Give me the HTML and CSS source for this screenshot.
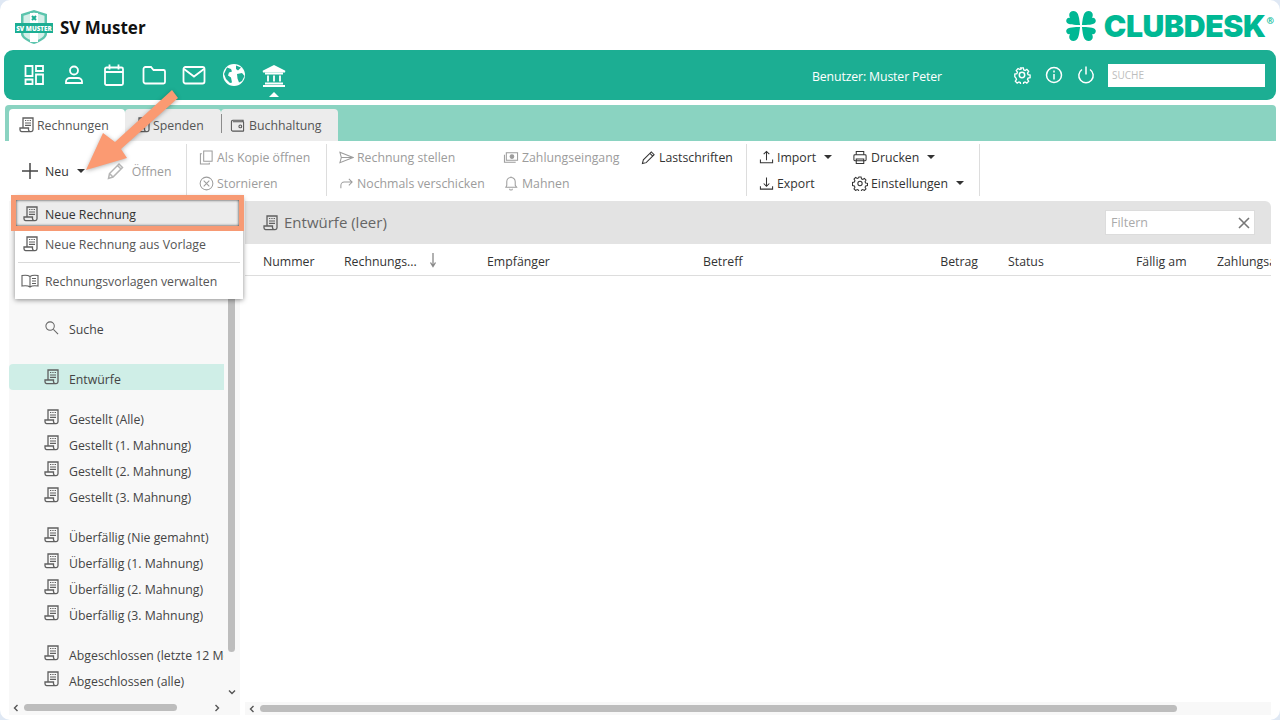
FILE: index.html
```html
<!DOCTYPE html>
<html lang="de">
  <head>
    <meta charset="UTF-8" />
    <meta name="viewport" content="width=device-width, initial-scale=1.0" />
    <title>ClubDesk - Rechnungen</title>
    <link rel="stylesheet" href="styles.css">
  </head>
  <body>
    <svg class="defs" width="0" height="0">
      <symbol id="i-doc" viewBox="0 0 15 16">
        <path d="M4 11V1h10V12.800a1.800 1.800 0 0 1-1.800 1.800H2.600A1.800 1.800 0 0 1 1 12.800V11h8.500v1.800a1.800 1.800 0 0 0 1.800 1.800" fill="none" stroke="currentColor" stroke-width="1.3"/>
        <path d="M6 3.500h1.300M8.300 3.500h1.300M10.600 3.500h1.400M6 6h6M6 8.400h6" fill="none" stroke="currentColor" stroke-width="1.2"/>
      </symbol>
      <symbol id="i-chev-l" viewBox="0 0 8 8"><path d="M5.500 1L2.500 4l3 3" fill="none" stroke="currentColor" stroke-width="1.4"/></symbol>
      <symbol id="i-chev-r" viewBox="0 0 8 8"><path d="M2.500 1l3 3-3 3" fill="none" stroke="currentColor" stroke-width="1.4"/></symbol>
      <symbol id="i-chev-d" viewBox="0 0 8 8"><path d="M1 2.500l3 3 3-3" fill="none" stroke="currentColor" stroke-width="1.4"/></symbol>
    </svg>

    <div class="window">
      <header class="top">
        <div class="brand">
          <svg class="club-logo" viewBox="0 0 38 36" width="38" height="36">
            <path d="M19 1l13 4v20c0 4-7 8-13 10-6-2-13-6-13-10V5z" fill="#5cc4ad"/>
            <path d="M19 3.500l10.500 3.200V25c0 3-6 6-10.500 7.500-4.500-1.500-10.500-4.500-10.500-7.500V6.700z" fill="#d5efe9"/>
            <path d="M15 4h8v29h-8z" fill="#fff"/>
            <path d="M17 7l4 4m0-4l-4 4" stroke="#1cae93" stroke-width="2"/>
            <rect x="0" y="14" width="38" height="10" fill="#1cae93"/>
            <text class="club-logo-text" x="19" y="21.8" text-anchor="middle">SV MUSTER</text>
          </svg>
          <span class="club-name">SV Muster</span>
        </div>
        <div class="clubdesk">
          <svg viewBox="-16.5 -15 33 30" width="30" height="30" preserveAspectRatio="none">
            <g fill="#00b894">
              <path id="leaf" d="M-1-1C-2-6-2-15-8-15C-13-15-14-11-12-8C-15-9-17-6-16-4C-15-1-6-1-1-1Z"/>
              <use href="#leaf" transform="scale(-1 1)"/>
              <use href="#leaf" transform="scale(1 -1)"/>
              <use href="#leaf" transform="scale(-1 -1)"/>
            </g>
          </svg>
          <span class="clubdesk-name">CLUBDESK</span><span class="clubdesk-reg">®</span>
        </div>
      </header>

      <nav class="nav">
        <div class="nav-icons">
          <svg class="nav-icon" viewBox="0 0 24 24"><path d="M3.500 3h7v10h-7zM14 3h7v5h-7zM14 11.500h7V21h-7zM3.500 16.500h7V21h-7z"/></svg>
          <svg class="nav-icon" viewBox="0 0 24 24"><circle cx="12" cy="7.5" r="4"/><path d="M4 20v-1.500c0-2 2-3.500 4-3.500h8c2 0 4 1.500 4 3.500V20z"/></svg>
          <svg class="nav-icon" viewBox="0 0 24 24"><rect x="3" y="4.5" width="18" height="17.5" rx="1.5"/><path d="M3 9h18M7.500 1.500v5M16.500 1.500v5"/></svg>
          <svg class="nav-icon" viewBox="0 0 24 24"><path d="M1.500 6a2 2 0 0 1 2-2h5.500l2.500 3h10a1.500 1.500 0 0 1 1.500 1.500V19a1.500 1.500 0 0 1-1.500 1.500H3.500a2 2 0 0 1-2-2z"/></svg>
          <svg class="nav-icon" viewBox="0 0 24 24"><rect x="1.5" y="4" width="21" height="16.5" rx="2"/><path d="M2 6l10 7.500L22 6"/></svg>
          <svg class="nav-icon globe" viewBox="0 0 24 24"><circle cx="12" cy="12" r="11" fill="#fff" stroke="none"/><path d="M5 4.500l4 1.500 1 2.500-3 1-1 3 3 2 1 5-2 .5-4-4-2-5zM14 2.500l5 2-3 3-2-1.500zM15 11l5-1 2.500 3-2.500 5-3 1.500-1.500-4z" fill="#1cae93" stroke="none"/></svg>
          <span class="nav-current">
            <svg class="nav-icon" viewBox="0 0 24 24"><path d="M1 8.500L12 3l11 5.500z" fill="#fff"/><path d="M3 10.500h18M6 12.500v6M12 12.500v6M18 12.500v6M3 20.500h18M1 23h22"/></svg>
          </span>
        </div>
        <span class="nav-user">Benutzer: Muster Peter</span>
        <div class="nav-tools">
          <svg class="nav-small" viewBox="0 0 18 18"><circle cx="9" cy="9" r="2.7"/><path d="M7.500 1h3l.4 2.300 1.500.7 2-1.200 2 2.200-1.300 1.900.6 1.600 2.300.5v3l-2.300.4-.6 1.500 1.300 2-2 2.100-2-1.300-1.500.7-.4 2.300h-3l-.4-2.300-1.500-.7-2 1.300-2-2.100 1.300-2-.6-1.500L1 11V8l2.300-.5.6-1.600L2.600 4 4.600 1.800l2 1.200 1.500-.7z" transform="translate(.9 .9) scale(.9)"/></svg>
          <svg class="nav-small" viewBox="0 0 18 18"><circle cx="9" cy="9" r="7.5"/><path d="M9 8v5.500M9 4.500v2"/></svg>
          <svg class="nav-small" viewBox="0 0 18 18"><path d="M5 3.500a7.200 7.200 0 1 0 8 0M9 .5v8"/></svg>
          <div class="nav-search">SUCHE</div>
        </div>
      </nav>

      <div class="tabs">
        <div class="tab tab-active"><svg class="doc-icon"><use href="#i-doc"/></svg>Rechnungen</div>
        <div class="tab"><svg class="doc-icon"><use href="#i-doc"/></svg>Spenden</div>
        <div class="tab tab-divided">
          <svg class="tool-icon" viewBox="0 0 16 16"><path d="M14 4V2.500H3a1.500 1.500 0 0 0-1.500 1.500v8.500A1.500 1.500 0 0 0 3 14h11a.5 .5 0 0 0 .5-.5v-9a.5 .5 0 0 0-.5-.5H3"/><circle cx="11" cy="9" r="1.5"/></svg>
          Buchhaltung
        </div>
      </div>

      <div class="toolbar">
        <div class="tool-group group-new">
          <div class="tool"><svg class="plus-icon" viewBox="0 0 16 16"><path d="M8 0v16M0 8h16"/></svg>Neu<i class="caret"></i></div>
          <div class="tool off"><svg class="pencil-icon" viewBox="0 0 18 18"><path d="M1.500 16.500l1-5L12 2l3.500 3.500L6 15zM2.500 11.500L6 15M10.500 3.500L14 7"/></svg>Öffnen</div>
        </div>
        <div class="tool-group">
          <div class="tool off"><svg class="tool-icon" viewBox="0 0 16 16"><path d="M5 1h9v11H5zM3 4H1.500v11H11v-1.500"/></svg>Als Kopie öffnen</div>
          <div class="tool off"><svg class="tool-icon" viewBox="0 0 16 16"><circle cx="8" cy="8" r="6.8"/><path d="M5 5l6 6M11 5l-6 6"/></svg>Stornieren</div>
        </div>
        <div class="tool-group group-bill">
          <div class="tool off"><svg class="tool-icon" viewBox="0 0 16 16"><path d="M1 2.500L15 8 1 13.500l1.500-5.500zM2.500 8H15"/></svg>Rechnung stellen</div>
          <div class="tool off"><svg class="tool-icon wide" viewBox="0 0 16 16"><path d="M3 3h12v8H3zM1 5v8h12"/><circle cx="9" cy="7" r="2" fill="currentColor"/></svg>Zahlungseingang</div>
          <div class="tool"><svg class="tool-icon" viewBox="0 0 16 16"><path d="M1.500 14.500l1-4L11 2l3 3-8.500 8.500zM9.500 3.500l3 3"/></svg>Lastschriften</div>
          <div class="tool off"><svg class="tool-icon" viewBox="0 0 16 16"><path d="M2 13V10a3.500 3.500 0 0 1 3.500-3.500H14M10.500 3l3.500 3.500L10.500 10"/></svg>Nochmals verschicken</div>
          <div class="tool off"><svg class="tool-icon wide" viewBox="0 0 16 16"><path d="M14 12H2.500l1-2V6a4.500 4.500 0 0 1 9 0v4zM6.500 13.500a1.500 1.500 0 0 0 3 0M8 .5v1"/></svg>Mahnen</div>
        </div>
        <div class="tool-group group-data">
          <div class="tool"><svg class="tool-icon" viewBox="0 0 16 16"><path d="M8 11V2M5 4.500L8 1.500l3 3M1.500 10v3.500h13V10"/></svg>Import<i class="caret"></i></div>
          <div class="tool"><svg class="tool-icon wide" viewBox="0 0 16 16"><rect x="1.5" y="5" width="13" height="6.5" rx="1"/><path d="M4 5V1.500h8V5M4 9.500h8V14.500H4z"/></svg>Drucken<i class="caret"></i></div>
          <div class="tool"><svg class="tool-icon" viewBox="0 0 16 16"><path d="M8 1.500V11M5 8l3 3 3-3M1.500 11v3h13v-3"/></svg>Export</div>
          <div class="tool"><svg class="tool-icon wide" viewBox="0 0 16 16"><circle cx="8" cy="8" r="2.3"/><path d="M6.800 1h2.400l.4 2 1.300.6 1.800-1 1.700 1.700-1 1.800.6 1.300 2 .4v2.400l-2 .4-.6 1.300 1 1.800-1.700 1.700-1.800-1-1.300.6-.4 2H6.800l-.4-2-1.300-.6-1.800 1-1.700-1.700 1-1.800-.6-1.300-2-.4V6.800l2-.4.600-1.300-1-1.800 1.700-1.700 1.800 1 1.300-.6z"/></svg>Einstellungen<i class="caret"></i></div>
        </div>
      </div>

      <div class="content">
        <aside class="side">
          <div class="side-list">
            <div class="side-row side-search">
              <svg class="tool-icon" viewBox="0 0 16 16"><circle cx="6.5" cy="6.5" r="4.5"/><path d="M10 10l5 5"/></svg>Suche
            </div>
            <div class="side-row side-gap side-active"><svg class="doc-icon"><use href="#i-doc"/></svg>Entwürfe</div>
            <div class="side-row side-gap"><svg class="doc-icon"><use href="#i-doc"/></svg>Gestellt (Alle)</div>
            <div class="side-row"><svg class="doc-icon"><use href="#i-doc"/></svg>Gestellt (1. Mahnung)</div>
            <div class="side-row"><svg class="doc-icon"><use href="#i-doc"/></svg>Gestellt (2. Mahnung)</div>
            <div class="side-row"><svg class="doc-icon"><use href="#i-doc"/></svg>Gestellt (3. Mahnung)</div>
            <div class="side-row side-gap"><svg class="doc-icon"><use href="#i-doc"/></svg>Überfällig (Nie gemahnt)</div>
            <div class="side-row"><svg class="doc-icon"><use href="#i-doc"/></svg>Überfällig (1. Mahnung)</div>
            <div class="side-row"><svg class="doc-icon"><use href="#i-doc"/></svg>Überfällig (2. Mahnung)</div>
            <div class="side-row"><svg class="doc-icon"><use href="#i-doc"/></svg>Überfällig (3. Mahnung)</div>
            <div class="side-row side-gap"><svg class="doc-icon"><use href="#i-doc"/></svg>Abgeschlossen (letzte 12 Monate)</div>
            <div class="side-row"><svg class="doc-icon"><use href="#i-doc"/></svg>Abgeschlossen (alle)</div>
          </div>
          <div class="scroll-v">
            <div class="thumb-v"></div>
            <svg class="chev chev-down"><use href="#i-chev-d"/></svg>
          </div>
          <div class="scroll-h side-scroll-h">
            <svg class="chev"><use href="#i-chev-l"/></svg>
            <div class="thumb-h"></div>
            <svg class="chev chev-end"><use href="#i-chev-r"/></svg>
          </div>
          <div class="scroll-corner"></div>
        </aside>

        <main class="main">
          <div class="main-head">
            <svg class="doc-icon"><use href="#i-doc"/></svg>
            <span class="main-title">Entwürfe (leer)</span>
            <div class="filter">
              <span>Filtern</span>
              <svg class="filter-x" viewBox="0 0 12 12"><path d="M1 1l10 10M11 1L1 11"/></svg>
            </div>
          </div>
          <div class="table-head">
            <span>Nummer</span>
            <span class="sorted">Rechnungs... <svg class="sort-arrow" viewBox="0 0 8 16"><path d="M4 1v13M1.500 10.500L4 14.500l2.500-4" /></svg></span>
            <span>Empfänger</span>
            <span>Betreff</span>
            <span class="col-amount">Betrag</span>
            <span class="col-status">Status</span>
            <span>Fällig am</span>
            <span>Zahlungsart</span>
          </div>
          <div class="table-body"></div>
          <div class="scroll-h main-scroll-h">
            <svg class="chev"><use href="#i-chev-l"/></svg>
            <div class="thumb-h"></div>
          </div>
        </main>
      </div>

      <div class="menu">
        <div class="menu-row menu-hover"><svg class="doc-icon"><use href="#i-doc"/></svg>Neue Rechnung</div>
        <div class="menu-row"><svg class="doc-icon"><use href="#i-doc"/></svg>Neue Rechnung aus Vorlage</div>
        <div class="menu-sep"></div>
        <div class="menu-row">
          <svg class="book-icon" viewBox="0 0 18 14"><path d="M9 2.500C7 1 4 1 1 1.500v10.500c3-.5 6-.5 8 1 2-1.500 5-1.500 8-1V1.500C14 1 11 1 9 2.500zM9 2.500V13M11 4.500h4M11 7h4M11 9.500h4"/></svg>
          Rechnungsvorlagen verwalten
        </div>
      </div>
      <div class="highlight"></div>
      <svg class="arrow" viewBox="0 0 1280 720" width="1280" height="720">
        <polygon points="86,170 103,133 115,142 172,90 178,98 121,149 127,158"/>
      </svg>
    </div>
  </body>
</html>
```

FILE: styles.css
```css
html {
  background-color: #dfe8f4;
}

body {
  margin: 0;
  font-family: "Open Sans", Arial, sans-serif;
  font-size: 12.3px;
  color: #333333;
}

.defs {
  position: absolute;
}

.window {
  position: relative;
  width: 1280px;
  height: 720px;
  background-color: #ffffff;
  border-radius: 10px;
  overflow: hidden;
}

/* header */
.top {
  height: 50px;
  display: flex;
  justify-content: space-between;
  align-items: center;
  padding: 0 6px 0 15px;
  box-sizing: border-box;
}

.brand {
  display: flex;
  align-items: center;
  gap: 7px;
  margin-top: 4px;
}

.club-logo-text {
  font-family: "Open Sans", sans-serif;
  font-size: 6.3px;
  font-weight: 800;
  fill: #ffffff;
}

.club-name {
  font-size: 17px;
  font-weight: 700;
  color: #111111;
}

.clubdesk {
  display: flex;
  align-items: center;
  margin-top: 2px;
}

.clubdesk-name {
  font-family: Inter, Arial, sans-serif;
  font-size: 30.2px;
  font-weight: 900;
  letter-spacing: -0.4px;
  color: #00b894;
  margin-left: 8px;
}

.clubdesk-reg {
  font-size: 9px;
  font-weight: 700;
  color: #00b894;
  margin: -12px 0 0 1px;
}

/* main navigation */
.nav {
  height: 50px;
  margin: 0 4px;
  padding: 0 11px 0 18px;
  display: flex;
  align-items: center;
  background-color: #1cae93;
  border-radius: 9px;
  color: #ffffff;
}

.nav-icons {
  display: flex;
  gap: 16px;
}

.nav-icon {
  width: 24px;
  height: 24px;
  display: block;
  fill: none;
  stroke: #ffffff;
  stroke-width: 1.8;
}

.nav-current {
  position: relative;
}

.nav-current::after {
  content: "";
  position: absolute;
  left: 7px;
  top: 29px;
  border-left: 5px solid transparent;
  border-right: 5px solid transparent;
  border-bottom: 5px solid #ffffff;
}

.nav-user {
  margin-left: auto;
  letter-spacing: -0.14px;
  position: relative;
  top: 1px;
}

.nav-tools {
  display: flex;
  align-items: center;
  gap: 14px;
  margin-left: 71px;
}

.nav-small {
  width: 18px;
  height: 18px;
  fill: none;
  stroke: #ffffff;
  stroke-width: 1.5;
}

.nav-search {
  width: 157px;
  height: 23px;
  margin-left: -1px;
  padding-left: 4px;
  box-sizing: border-box;
  background-color: #ffffff;
  color: #bdbdbd;
  font-size: 10px;
  line-height: 23px;
}

/* tabs */
.tabs {
  height: 36px;
  margin: 5px 4px 0 5px;
  padding: 4px 0 0 4px;
  box-sizing: border-box;
  display: flex;
  background-color: #8ad3c1;
  border-radius: 4px 4px 0 0;
}

.tab {
  width: 96px;
  display: flex;
  align-items: center;
  gap: 3px;
  padding-left: 10px;
  box-sizing: border-box;
  background-color: #ececec;
  border-radius: 4px 4px 0 0;
  color: #555555;
}

.tab-active {
  width: 116px;
  background-color: #ffffff;
}

.tab-divided {
  width: 117px;
  position: relative;
  padding-left: 9px;
  gap: 4px;
}

.tab-divided::before {
  content: "";
  position: absolute;
  left: 0;
  top: 5px;
  height: 19px;
  border-left: 1px solid #8c8c8c;
}

.doc-icon {
  width: 15px;
  height: 16px;
  flex: none;
  color: #5f5f5f;
}

.tool-icon {
  width: 15px;
  height: 15px;
  flex: none;
  fill: none;
  stroke: currentColor;
  stroke-width: 1.1;
}

.wide {
  width: 16px;
}

/* toolbar */
.toolbar {
  height: 60px;
  padding: 3px 0 0 13px;
  box-sizing: border-box;
  display: flex;
  align-items: flex-start;
}

.tool-group {
  height: 52px;
  display: grid;
  grid-template-rows: 26px 26px;
  padding: 0 12px;
  border-right: 1px solid #dddddd;
  width: 115px;
}

.group-new {
  width: 164px;
  padding: 0 0 0 9px;
  display: flex;
  align-items: center;
  gap: 22px;
}

.group-bill {
  width: 395px;
  padding-right: 12px;
  grid-template-columns: 164px 138px 1fr;
}

.group-data {
  width: 219px;
  padding-right: 1px;
  grid-template-columns: 93px 1fr;
}

.tool {
  display: flex;
  align-items: center;
  gap: 3px;
  white-space: nowrap;
}

.group-new .tool {
  height: 26px;
  position: relative;
  top: 1px;
}

.off {
  color: #9c9c9c;
}

.plus-icon {
  width: 16px;
  height: 16px;
  margin-right: 4px;
  stroke: #444444;
  stroke-width: 1.5;
}

.pencil-icon {
  width: 18px;
  height: 18px;
  margin-right: 4px;
  fill: none;
  stroke: #b5b5b5;
  stroke-width: 1.5;
}

.caret {
  display: inline-block;
  margin-left: 5px;
  border-left: 4px solid transparent;
  border-right: 4px solid transparent;
  border-top: 4px solid #333333;
}

/* sidebar and table */
.content {
  height: 514px;
  padding: 0 9px;
  display: flex;
  gap: 5px;
}

.side {
  width: 231px;
  flex: none;
  display: grid;
  grid-template-columns: 215px 16px;
  grid-template-rows: 499px 15px;
}

.side-list {
  background-color: #f8f8f8;
  padding-top: 113px;
  box-sizing: border-box;
  overflow: hidden;
}

.side-row {
  height: 26px;
  display: flex;
  align-items: center;
  gap: 10px;
  padding: 4px 0 0 35px;
  box-sizing: border-box;
  white-space: nowrap;
  color: #444444;
}

.side-row svg {
  position: relative;
  top: -2px;
}

.side-search .tool-icon {
  color: #666666;
}

.side-gap {
  margin-top: 14px;
}

.side-search + .side-gap {
  margin-top: 24px;
}

.side-active {
  background-color: #cfeee7;
  border-radius: 4px 0 0 4px;
}

.scroll-v {
  position: relative;
  background-color: #f8f8f8;
}

.thumb-v {
  width: 7px;
  height: 451px;
  margin-left: 4px;
  background-color: #bdbdbd;
  border-radius: 0 0 4px 4px;
}

.chev {
  width: 8px;
  height: 8px;
  flex: none;
  color: #555555;
}

.chev-down {
  position: absolute;
  left: 4px;
  bottom: 4px;
}

.chev-end {
  margin-left: auto;
}

.scroll-h {
  display: flex;
  align-items: center;
  background-color: #f8f8f8;
}

.side-scroll-h {
  height: 15px;
  padding: 0 3px;
  gap: 4px;
}

.side-scroll-h .thumb-h {
  width: 153px;
}

.scroll-corner {
  background-color: #f8f8f8;
}

.thumb-h {
  height: 7px;
  background-color: #bdbdbd;
  border-radius: 4px;
}

.main {
  flex: 1;
  min-width: 0;
  display: flex;
  flex-direction: column;
}

.main-head {
  height: 43px;
  flex: none;
  display: flex;
  align-items: center;
  padding: 0 16px 0 18px;
  gap: 6px;
  background-color: #e3e3e3;
  border-radius: 0 6px 0 0;
}

.main-title {
  font-size: 15px;
  line-height: 18px;
  margin-top: -2px;
  color: #666666;
}

.filter {
  width: 150px;
  height: 25px;
  margin-left: auto;
  padding: 0 4px 0 5px;
  box-sizing: border-box;
  display: flex;
  justify-content: space-between;
  align-items: center;
  background-color: #ffffff;
  border: 1px solid #dcdcdc;
  color: #aaaaaa;
  font-size: 12.5px;
}

.filter-x {
  width: 12px;
  height: 12px;
  fill: none;
  stroke: #777777;
  stroke-width: 1.6;
}

.table-head {
  height: 32px;
  flex: none;
  padding: 4px 0 0 18px;
  display: grid;
  grid-template-columns: 81px 143px 216px 195px 80px 158px 81px 100px;
  align-items: center;
  border-bottom: 1px solid #dddddd;
  box-sizing: border-box;
  white-space: nowrap;
  overflow: hidden;
}

.sorted {
  display: flex;
  align-items: center;
  gap: 12px;
}

.sort-arrow {
  width: 8px;
  height: 16px;
  margin-top: -3px;
  fill: none;
  stroke: #888888;
  stroke-width: 1.3;
}

.col-amount {
  text-align: right;
}

.col-status {
  padding-left: 30px;
}

.table-body {
  flex: 1;
}

.main-scroll-h {
  height: 13px;
  padding: 0 0 0 3px;
  gap: 4px;
}

.main-scroll-h .thumb-h {
  width: 917px;
}

/* things lying over the page */
.menu {
  position: absolute;
  left: 15px;
  top: 197px;
  width: 228px;
  height: 102px;
  padding-top: 2px;
  box-sizing: border-box;
  background-color: #ffffff;
  box-shadow: 0 1px 5px rgba(0, 0, 0, 0.45);
}

.menu-row {
  height: 30px;
  display: flex;
  align-items: center;
  gap: 7px;
  padding-left: 8px;
  color: #555555;
}

.menu-hover {
  background-color: #ececec;
  color: #333333;
}

.menu-sep {
  height: 1px;
  margin: 3px;
  background-color: #d9d9d9;
}

.book-icon {
  width: 18px;
  height: 14px;
  flex: none;
  margin: 0 -1px 0 -2px;
  fill: none;
  stroke: #5f5f5f;
  stroke-width: 1.1;
}

.highlight {
  position: absolute;
  left: 11px;
  top: 195px;
  width: 233px;
  height: 36px;
  box-sizing: border-box;
  border: 5px solid #f79a74;
  box-shadow: inset 0 0 3px rgba(0, 0, 0, 0.8);
}

.arrow {
  position: absolute;
  left: 0;
  top: 0;
  fill: #fb9a72;
  filter: drop-shadow(0 1px 2px rgba(0, 0, 0, 0.3));
  pointer-events: none;
}
```
